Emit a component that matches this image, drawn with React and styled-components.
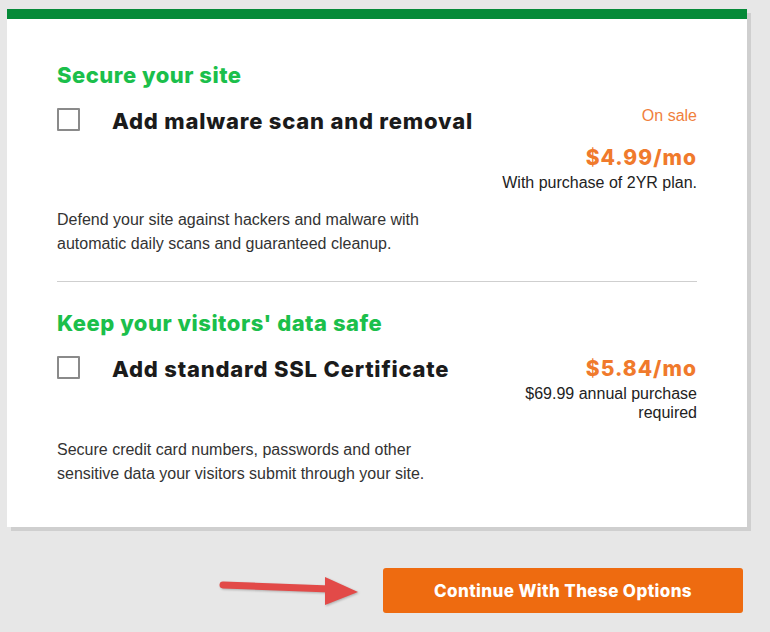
import React from "react"
import styled, { createGlobalStyle } from "styled-components"

const GlobalStyle = createGlobalStyle`
  html, body {
    margin: 0;
    padding: 0;
    background: #e7e7e7;
  }
  body {
    font-family: "Liberation Sans", Arial, sans-serif;
  }
`

const Page = styled.div`
  width: 770px;
  height: 632px;
  padding: 9px 0 0 7px;
  box-sizing: border-box;
`

const Card = styled.div`
  width: 740px;
  box-sizing: border-box;
  background: #fff;
  border-top: 10px solid #058a38;
  box-shadow: 4px 4px 0 #cfcfcf;
  padding: 41px 50px 41px 50px;
`

const Section = styled.div``

const Divider = styled.hr`
  border: 0;
  border-top: 1px solid #cfcfcf;
  margin: 25px 0 26px;
`

const Heading = styled.h2`
  margin: 0 0 16px;
  font-family: "Inter", sans-serif;
  font-weight: 800;
  font-size: 22px;
  line-height: 30px;
  letter-spacing: 0.5px;
  color: #1bbf4b;
`

const Row = styled.div`
  display: flex;
  justify-content: space-between;
  align-items: flex-start;
`

const Option = styled.label`
  display: flex;
  align-items: flex-start;
  gap: 32px;
`

const Box = styled.span`
  display: block;
  width: 19px;
  height: 19px;
  margin-top: 2px;
  border: 2px solid #8a8a8a;
  border-radius: 1px;
  background: #fff;
`

const Title = styled.span`
  font-family: "Inter", sans-serif;
  font-weight: 800;
  font-size: 22px;
  line-height: 30px;
  letter-spacing: 0.8px;
  color: #1b1b1b;
`

const Pricing = styled.div`
  text-align: right;
  color: #222;
`

const Sale = styled.div`
  font-size: 16px;
  line-height: 20px;
  color: #f0803c;
  margin-bottom: 17px;
`

const Price = styled.div`
  font-family: "Inter", sans-serif;
  font-weight: 800;
  font-size: 21px;
  line-height: 30px;
  letter-spacing: 1px;
  color: #f07a2c;
`

const Terms = styled.div`
  font-size: 16px;
  line-height: 19px;
  width: ${(p) => p.width || "auto"};
  margin-left: auto;
`

const Desc = styled.p`
  margin: 16px 0 0;
  font-size: 16px;
  line-height: 24px;
  color: #333;
`

const Footer = styled.div`
  display: flex;
  justify-content: flex-end;
  align-items: center;
  gap: 21px;
  width: 736px;
  margin-top: 41px;
`

const Arrow = styled.svg`
  display: block;
  filter: drop-shadow(1px 1px 1px rgba(0, 0, 0, 0.25));
`

const Button = styled.button`
  width: 360px;
  height: 45px;
  border: 0;
  border-radius: 3px;
  background: #ee6b10;
  color: #fff;
  font-family: "Inter", sans-serif;
  font-weight: 800;
  font-size: 17px;
  letter-spacing: 0.4px;
  cursor: pointer;
`

const addons = [
  {
    heading: "Secure your site",
    title: "Add malware scan and removal",
    sale: "On sale",
    price: "$4.99/mo",
    terms: "With purchase of 2YR plan.",
    desc: [
      "Defend your site against hackers and malware with",
      "automatic daily scans and guaranteed cleanup.",
    ],
  },
  {
    heading: "Keep your visitors' data safe",
    title: "Add standard SSL Certificate",
    price: "$5.84/mo",
    terms: "$69.99 annual purchase required",
    termsWidth: "175px",
    desc: [
      "Secure credit card numbers, passwords and other",
      "sensitive data your visitors submit through your site.",
    ],
  },
]

const App = () => {
  return (
    <Page>
      <GlobalStyle />
      <Card>
        {addons.map((a, i) => (
          <Section key={a.title}>
            {i > 0 && <Divider />}
            <Heading>{a.heading}</Heading>
            <Row>
              <Option>
                <Box />
                <Title>{a.title}</Title>
              </Option>
              <Pricing>
                {a.sale && <Sale>{a.sale}</Sale>}
                <Price>{a.price}</Price>
                <Terms width={a.termsWidth}>{a.terms}</Terms>
              </Pricing>
            </Row>
            <Desc>
              {a.desc[0]}
              <br />
              {a.desc[1]}
            </Desc>
          </Section>
        ))}
      </Card>
      <Footer>
        <Arrow width="144" height="36" viewBox="0 0 144 36">
          <line x1="5" y1="12" x2="112" y2="16" stroke="#e24a48" strokeWidth="7" strokeLinecap="round" />
          <polygon points="107,4 140,19 107,32" fill="#e24a48" />
        </Arrow>
        <Button>Continue With These Options</Button>
      </Footer>
    </Page>
  )
}

export default App
